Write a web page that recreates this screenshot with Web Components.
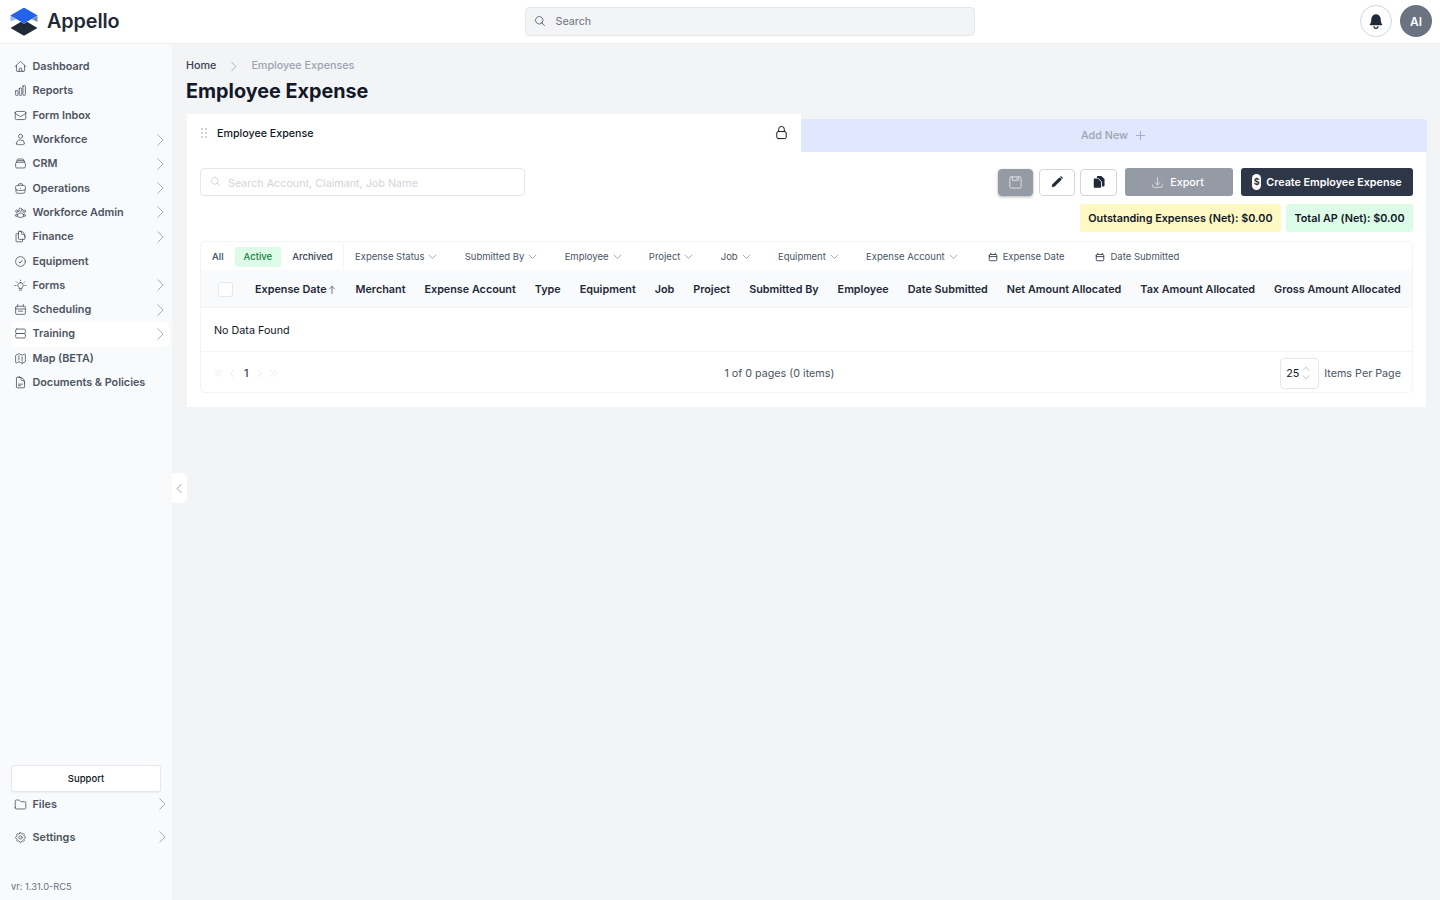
<!DOCTYPE html>
<html lang="en"><head><meta charset="utf-8"><title>Employee Expense</title>
<style>
html,body{margin:0;padding:0;height:100%;overflow:hidden;background:#f3f4f6;font-family:Inter,"Liberation Sans",sans-serif;color:#111827}
</style></head><body>
<app-shell>
  <app-header slot="header"></app-header>
  <side-nav slot="nav"></side-nav>
  <expense-page slot="main"></expense-page>
</app-shell>
<script>
const P={
home:'M2.25 12l8.954-8.955c.44-.439 1.152-.439 1.591 0L21.75 12M4.5 9.75v10.125c0 .621.504 1.125 1.125 1.125H9.75v-4.875c0-.621.504-1.125 1.125-1.125h2.25c.621 0 1.125.504 1.125 1.125V21h4.125c.621 0 1.125-.504 1.125-1.125V9.75M8.25 21h8.25',
chart:'M3 13.125C3 12.504 3.504 12 4.125 12h2.25c.621 0 1.125.504 1.125 1.125v6.75C7.5 20.496 6.996 21 6.375 21h-2.25A1.125 1.125 0 013 19.875v-6.75zM9.75 8.625c0-.621.504-1.125 1.125-1.125h2.25c.621 0 1.125.504 1.125 1.125v11.25c0 .621-.504 1.125-1.125 1.125h-2.25a1.125 1.125 0 01-1.125-1.125V8.625zM16.5 4.125c0-.621.504-1.125 1.125-1.125h2.25C20.496 3 21 3.504 21 4.125v15.75c0 .621-.504 1.125-1.125 1.125h-2.25a1.125 1.125 0 01-1.125-1.125V4.125z',
mail:'M21.75 6.75v10.5a2.25 2.25 0 01-2.25 2.25h-15a2.25 2.25 0 01-2.25-2.25V6.75m19.5 0A2.25 2.25 0 0019.5 4.5h-15a2.25 2.25 0 00-2.25 2.25m19.5 0v.243a2.25 2.25 0 01-1.07 1.916l-7.5 4.615a2.25 2.25 0 01-2.36 0L3.32 8.91a2.25 2.25 0 01-1.07-1.916V6.75',
user:'M15.75 6a3.75 3.75 0 11-7.5 0 3.75 3.75 0 017.5 0zM4.501 20.118a7.5 7.5 0 0114.998 0A17.933 17.933 0 0112 21.75c-2.676 0-5.216-.584-7.499-1.632z',
stack:'M6 6.878V6a2.25 2.25 0 012.25-2.25h7.5A2.25 2.25 0 0118 6v.878m-12 0c.235-.083.487-.128.75-.128h10.5c.263 0 .515.045.75.128m-12 0A2.25 2.25 0 004.5 9v.878m13.5-3A2.25 2.25 0 0119.5 9v.878m0 0a2.246 2.246 0 00-.75-.128H5.25c-.263 0-.515.045-.75.128m15 0A2.25 2.25 0 0121 12v6a2.25 2.25 0 01-2.25 2.25H5.25A2.25 2.25 0 013 18v-6c0-.98.626-1.813 1.5-2.122',
brief:'M20.25 14.15v4.25c0 1.094-.787 2.036-1.872 2.18-2.087.277-4.216.42-6.378.42s-4.291-.143-6.378-.42c-1.085-.144-1.872-1.086-1.872-2.18v-4.25m16.5 0a2.18 2.18 0 00.75-1.661V8.706c0-1.081-.768-2.015-1.837-2.175a48.114 48.114 0 00-3.413-.387m4.5 8.006c-.194.165-.42.295-.673.38A23.978 23.978 0 0112 15.75c-2.648 0-5.195-.429-7.577-1.22a2.016 2.016 0 01-.673-.38m0 0A2.18 2.18 0 013 12.489V8.706c0-1.081.768-2.015 1.837-2.175a48.111 48.111 0 013.413-.387m7.5 0V5.25A2.25 2.25 0 0013.5 3h-3a2.25 2.25 0 00-2.25 2.25v.894m7.5 0a48.667 48.667 0 00-7.5 0M12 12.75h.008v.008H12v-.008z',
group:'M18 18.72a9.094 9.094 0 003.741-.479 3 3 0 00-4.682-2.72m.94 3.198l.001.031c0 .225-.012.447-.037.666A11.944 11.944 0 0112 21c-2.17 0-4.207-.576-5.963-1.584A6.062 6.062 0 016 18.719m12 0a5.971 5.971 0 00-.941-3.197m0 0A5.995 5.995 0 0012 12.75a5.995 5.995 0 00-5.058 2.772m0 0a3 3 0 00-4.681 2.72 8.986 8.986 0 003.74.477m.94-3.197a5.971 5.971 0 00-.94 3.197M15 6.75a3 3 0 11-6 0 3 3 0 016 0zm6 3a2.25 2.25 0 11-4.5 0 2.25 2.25 0 014.5 0zm-13.5 0a2.25 2.25 0 11-4.5 0 2.25 2.25 0 014.5 0z',
dup:'M15.75 17.25v3.375c0 .621-.504 1.125-1.125 1.125h-9.75a1.125 1.125 0 01-1.125-1.125V7.875c0-.621.504-1.125 1.125-1.125H6.75a9.06 9.06 0 011.5.124m7.5 10.376h3.375c.621 0 1.125-.504 1.125-1.125V11.25c0-4.46-3.243-8.161-7.5-8.876a9.06 9.06 0 00-1.5-.124H9.375c-.621 0-1.125.504-1.125 1.125v3.5m7.5 10.375H9.375a1.125 1.125 0 01-1.125-1.125v-9.25m12 6.625v-1.875a3.375 3.375 0 00-3.375-3.375h-1.5a1.125 1.125 0 01-1.125-1.125v-1.5a3.375 3.375 0 00-3.375-3.375H9.75',
check:'M9 12.75L11.25 15 15 9.75M21 12a9 9 0 11-18 0 9 9 0 0118 0z',
bulb:'M12 6.5a5 5 0 00-3 9v2.2h6v-2.2a5 5 0 00-3-9zM10 20.5h4M12 2v1.6M4.2 5l1.2 1.2M19.8 5l-1.2 1.2M2 12h1.8M20.2 12H22',
cal:'M6.75 3v3M17.25 3v3M3 8.5A2.25 2.25 0 015.25 6h13.5A2.25 2.25 0 0121 8.5v10.25A2.25 2.25 0 0118.75 21H5.25A2.25 2.25 0 013 18.75V8.5zM3 11h18',
cal2:'M6.750 3v3M17.250 3v3M3 8.500A2.250 2.250 0 015.250 6h13.500A2.250 2.250 0 0121 8.500v10.250A2.250 2.250 0 0118.750 21H5.250A2.250 2.250 0 013 18.750V8.500zM3 11h18M8 15h8',
server:'M5.25 3.75h13.5A2.25 2.25 0 0121 6v3.75A2.25 2.25 0 0118.75 12H5.25A2.25 2.25 0 013 9.75V6a2.25 2.25 0 012.25-2.25zM5.25 12h13.5A2.25 2.25 0 0121 14.25V18a2.25 2.25 0 01-2.25 2.25H5.25A2.25 2.25 0 013 18v-3.75A2.25 2.25 0 015.25 12z',
map:'M9 6.75V15m6-6v8.25m.503 3.498l4.875-2.437c.381-.19.622-.58.622-1.006V4.82c0-.836-.88-1.38-1.628-1.006l-3.869 1.934c-.317.159-.69.159-1.006 0L9.503 3.252a1.125 1.125 0 00-1.006 0L3.622 5.689C3.24 5.88 3 6.27 3 6.695V19.18c0 .836.88 1.38 1.628 1.006l3.869-1.934c.317-.159.69-.159 1.006 0l4.994 2.497c.317.158.69.158 1.006 0z',
doc:'M19.5 14.25v-2.625a3.375 3.375 0 00-3.375-3.375h-1.5A1.125 1.125 0 0113.5 7.125v-1.5a3.375 3.375 0 00-3.375-3.375H8.25m0 12.75h7.5m-7.5 3H12M10.5 2.25H5.625c-.621 0-1.125.504-1.125 1.125v17.25c0 .621.504 1.125 1.125 1.125h12.75c.621 0 1.125-.504 1.125-1.125V11.25a9 9 0 00-9-9z',
folder:'M2.25 18V6a2.25 2.25 0 012.25-2.25h4.379a1.5 1.5 0 011.061.44l2.12 2.12a1.5 1.5 0 001.06.44H19.5A2.25 2.25 0 0121.75 9v9a2.25 2.25 0 01-2.25 2.25h-15A2.25 2.25 0 012.25 18z',
cog:'M10.343 3.94c.09-.542.56-.94 1.11-.94h1.093c.55 0 1.02.398 1.11.94l.149.894c.07.424.384.764.78.93.398.164.855.142 1.205-.108l.737-.527a1.125 1.125 0 011.45.12l.773.774c.39.389.44 1.002.12 1.45l-.527.737c-.25.35-.272.806-.107 1.204.165.397.505.71.93.78l.893.15c.543.09.94.56.94 1.109v1.094c0 .55-.397 1.02-.94 1.11l-.893.149c-.425.07-.765.383-.93.78-.165.398-.143.854.107 1.204l.527.738c.32.447.269 1.06-.12 1.45l-.774.773a1.125 1.125 0 01-1.449.12l-.738-.527c-.35-.25-.806-.272-1.203-.107-.397.165-.71.505-.781.929l-.149.894c-.09.542-.56.94-1.11.94h-1.094c-.55 0-1.019-.398-1.11-.94l-.148-.894c-.071-.424-.384-.764-.781-.93-.398-.164-.854-.142-1.204.108l-.738.527c-.447.32-1.06.269-1.45-.12l-.773-.774a1.125 1.125 0 01-.12-1.45l.527-.737c.25-.35.273-.806.108-1.204-.165-.397-.505-.71-.93-.78l-.894-.15c-.542-.09-.94-.56-.94-1.11v-1.094c0-.55.398-1.02.94-1.11l.894-.149c.424-.07.765-.383.93-.78.165-.398.143-.854-.107-1.204l-.527-.738a1.125 1.125 0 01.12-1.45l.773-.773a1.125 1.125 0 011.45-.12l.737.527c.35.25.807.272 1.204.107.397-.165.71-.505.78-.929l.15-.894zM15 12a3 3 0 11-6 0 3 3 0 016 0z',
right:'M8.25 3l9 9-9 9',
left:'M15.75 21l-9-9 9-9',
down:'M21 8.25l-9 9-9-9',
search:'M21 21l-5.197-5.197m0 0A7.5 7.5 0 105.196 5.196a7.5 7.5 0 0010.607 10.607z',
lock:'M16.5 10.5V6.75a4.5 4.5 0 10-9 0v3.75m-.75 11.25h10.5a2.25 2.25 0 002.25-2.25v-6.75a2.25 2.25 0 00-2.25-2.25H6.75a2.25 2.25 0 00-2.25 2.25v6.75a2.25 2.25 0 002.25 2.25z',
plus:'M12 4.5v15m7.5-7.5h-15',
dl:'M3 16.5v2.25A2.25 2.25 0 005.25 21h13.5A2.25 2.25 0 0021 18.75V16.5M16.5 12L12 16.5m0 0L7.5 12m4.5 4.5V3',
save:'M5 3h14a2 2 0 012 2v14a2 2 0 01-2 2H5a2 2 0 01-2-2V5a2 2 0 012-2zM7 3v5.5h10V3M14 5v1.5',
up:'M12 21V3.500m0 0L6 9.500m6-6l6 6',
dleft:'M11.25 4.5l-7.5 7.5 7.5 7.5m9-15l-7.5 7.5 7.5 7.5',
dright:'M12.75 4.5l7.5 7.5-7.5 7.5m-9-15l7.5 7.5-7.5 7.5'
};
const svg=(n,s,c='currentColor',w=1.5,x='')=>`<svg xmlns="http://www.w3.org/2000/svg" width="${s}" height="${s}" viewBox="0 0 24 24" fill="none" stroke="${c}" stroke-width="${w}" stroke-linecap="round" stroke-linejoin="round" style="flex:none;display:block;${x}"><path d="${P[n]}"/></svg>`;
function def(name,html){customElements.define(name,class extends HTMLElement{constructor(){super();const r=this.attachShadow({mode:'open'});r.innerHTML=typeof html==='function'?html(this):html;}});}

def('app-shell',`<style>
:host{display:grid;grid-template-columns:172px minmax(0,1fr);grid-template-rows:44px 856px;height:900px;width:1440px}
.h{grid-column:1/3;min-width:0}
.n{position:relative;min-width:0}
.m{min-width:0}
</style>
<div class="h"><slot name="header"></slot></div>
<div class="n"><slot name="nav"></slot></div>
<div class="m"><slot name="main"></slot></div>`);

def('app-header',`<style>
:host{display:grid;grid-template-columns:515px 450px minmax(0,1fr);align-items:center;height:44px;box-sizing:border-box;background:#fff;border-bottom:1px solid #eceef1;padding:0 8px 1px 10px;position:relative}
.logo{display:flex;align-items:center;gap:9px}
.name{font:600 19.800px/24px Inter,sans-serif;color:#1f2937;letter-spacing:-.1px}
.s{height:29px;box-sizing:border-box;background:#f3f4f6;border:1px solid #e5e7eb;border-radius:4px;display:flex;align-items:center;gap:9.500px;padding-left:8px;font:400 10.750px Inter,sans-serif;color:#6b7280}
.r{display:flex;justify-content:flex-end;align-items:center;gap:8px}
.b{width:32px;height:32px;box-sizing:border-box;border:1px solid #d1d5db;border-radius:50%;display:flex;align-items:center;justify-content:center}
.a{width:32px;height:32px;border-radius:50%;background:#6b7280;color:#fff;font:600 12px Inter,sans-serif;display:flex;align-items:center;justify-content:center}
</style>
<div class="logo"><svg width="28" height="29" viewBox="0 0 28 29" style="display:block;flex:none"><path d="M.5 21 14 13l13.500 8L14 28.700z" fill="#1f2937"/><path d="M.5 8.500v5.700l7-2.500z" fill="#93b4f5"/><path d="M27.500 8.500v6.500l-6.500-3.200z" fill="#7f8da3"/><path d="M.5 8.500 14 .7l13.500 7.800L14 16.200z" fill="#2563eb" stroke="#fff" stroke-width=".9" paint-order="stroke"/><path d="M.5 8.500 14 .7l13.500 7.800L14 16.200z" fill="#2563eb"/></svg><span class="name">Appello</span></div>
<div class="s">${svg('search',12,'#6b7280',2)}<span>Search</span></div>
<div class="r"><div class="b"><svg width="16" height="16" viewBox="0 0 24 24" fill="#1f2937"><path d="M12 2a7 7 0 00-7 7c0 4-.9 6.300-2.300 8-.4.6 0 1.300.7 1.300h17.200c.7 0 1.100-.7.700-1.300C19.900 15.300 19 13 19 9a7 7 0 00-7-7z"/><path d="M9 20a3 3 0 006 0" fill="none" stroke="#1f2937" stroke-width="1.800"/></svg></div><div class="a">AI</div></div>`);

const ICONS={Dashboard:'home',Reports:'chart','Form Inbox':'mail',Workforce:'user',CRM:'stack',Operations:'brief','Workforce Admin':'group',Finance:'dup',Equipment:'check',Forms:'bulb',Scheduling:'cal2',Training:'server','Map (BETA)':'map','Documents & Policies':'doc',Files:'folder',Settings:'cog'};
def('nav-item',el=>{const l=el.getAttribute('label');return `<style>
:host{display:flex;align-items:center;height:24.3px;border-radius:4px;padding:0 2px 0 3px;gap:5.500px;font:600 10.800px/14px Inter,sans-serif;color:#4b5563}
:host([active]){background:#fff}
span{flex:1;white-space:nowrap}
</style>${svg(ICONS[l],13,'#4b5563',1.5,'margin-top:-1px')}<span>${l}</span>${el.hasAttribute('arrow')?svg('right',14,'#6b7280',1,'margin-top:-1px'):''}`});

def('side-nav',`<style>
:host{display:flex;flex-direction:column;height:856px;box-sizing:border-box;background:#f9fafb;padding:11px 0 7px 11px;position:relative}
.list{margin-right:3px}
.bottom{margin-top:auto;display:flex;flex-direction:column}
.sup{width:150px;height:27px;box-sizing:border-box;background:#fff;border:1px solid #e5e7eb;border-radius:3px;box-shadow:0 1px 1px rgba(0,0,0,.05);font:500 9.500px Inter,sans-serif;color:#111827;display:flex;align-items:center;justify-content:center;margin-bottom:1px}
nav-item.w{padding-right:3px}
.g{margin-top:8.700px}
.v{margin-top:31px;font:400 9.300px/12px Inter,sans-serif;color:#6b7280}
.tog{position:absolute;left:172px;top:429px;width:15px;height:30px;background:#fff;border-radius:0 6px 6px 0;display:flex;align-items:center;justify-content:center;z-index:2}
</style>
<div class="list">
<nav-item label="Dashboard"></nav-item><nav-item label="Reports"></nav-item><nav-item label="Form Inbox"></nav-item>
<nav-item label="Workforce" arrow></nav-item><nav-item label="CRM" arrow></nav-item><nav-item label="Operations" arrow></nav-item>
<nav-item label="Workforce Admin" arrow></nav-item><nav-item label="Finance" arrow></nav-item><nav-item label="Equipment"></nav-item>
<nav-item label="Forms" arrow></nav-item><nav-item label="Scheduling" arrow></nav-item><nav-item label="Training" arrow active></nav-item>
<nav-item label="Map (BETA)"></nav-item><nav-item label="Documents &amp; Policies"></nav-item>
</div>
<div class="bottom"><div class="sup">Support</div>
<nav-item class="w" label="Files" arrow></nav-item><nav-item class="w g" label="Settings" arrow></nav-item>
<div class="v">vr: 1.31.0-RC5</div></div>
<div class="tog">${svg('left',11,'#6b7280',1.4)}</div>`);

def('page-tabs',`<style>
:host{display:flex;align-items:flex-end;height:38px}
.t{width:614px;height:38px;box-sizing:border-box;background:#fff;display:flex;align-items:flex-start;padding:12.600px 12px 0 14px;font:500 10.700px/14px Inter,sans-serif;color:#111827;gap:10px}
.t span{flex:1}
.d{display:grid;grid-template-columns:2px 2px;gap:2px;margin-top:1px;width:6px}
.d i{width:2px;height:2px;background:#d1d5db}
.a{flex:1;height:33px;box-sizing:border-box;padding-bottom:1px;background:#e0e7ff;border-radius:0 3px 0 0;display:flex;align-items:center;justify-content:center;gap:6px;font:500 10.750px Inter,sans-serif;color:#9ca3af}
</style>
<div class="t"><div class="d"><i></i><i></i><i></i><i></i><i></i><i></i></div><span>Employee Expense</span>${svg('lock',15,'#111827',1.6,'margin-top:-1.600px')}</div>
<div class="a">Add New ${svg('plus',13,'#9ca3af',1.6)}</div>`);

def('tool-bar',`<style>
:host{display:flex;flex-direction:column;gap:8px;padding:16px 13px 0 13px}
.row{display:flex;justify-content:space-between;align-items:flex-start}
.s{width:325px;height:28px;box-sizing:border-box;border:1px solid #e5e7eb;border-radius:4px;display:flex;align-items:center;gap:7px;padding:2px 0 0 9px;font:400 10.750px Inter,sans-serif;color:#d1d5db}
.s svg{margin-top:-3px}
.acts{display:flex;align-items:center}
.i{width:36px;height:27px;box-sizing:border-box;border:1px solid #d1d5db;border-radius:4px;display:flex;align-items:center;justify-content:center;background:#fff;margin-right:5px}
.i.sv{width:35px;background:#959ba4;border-color:#959ba4;box-shadow:0 1px 3px rgba(0,0,0,.3);margin-right:6px}
.i.cp{width:37px}
.e{width:108px;height:28px;box-sizing:border-box;margin-left:3px;background:#959ba4;border-radius:3px;color:#fff;font:500 10.750px Inter,sans-serif;display:flex;align-items:center;justify-content:center;gap:6px;padding-right:3px}
.c{width:172px;height:28px;box-sizing:border-box;margin-left:8px;background:#2d3748;border-radius:3px;color:#fff;font:600 10.750px Inter,sans-serif;display:flex;align-items:center;justify-content:center;gap:5px}
.m{width:9px;height:16px;border-radius:5px;background:#fff;color:#2d3748;font:700 9px/16px Inter,sans-serif;text-align:center}
.bd{display:flex;justify-content:flex-end;gap:5px}
.bd div{height:28px;box-sizing:border-box;border-radius:3px;font:600 10.800px/29px Inter,sans-serif;color:#111827;padding:0 8.500px}
.y{background:#fef9c3}.g{background:#dcfce7}
</style>
<div class="row"><div class="s">${svg('search',11,'#d1d5db',2)}<span>Search Account, Claimant, Job Name</span></div>
<div class="acts"><div class="i sv">${svg('save',15,'#e5e7eb',1.4)}</div>
<div class="i"><svg width="14" height="14" viewBox="0 0 24 24" fill="#1f2937"><path d="M3 21l1.200-5L16.500 3.800l3.700 3.700L8 19.800z"/><path d="M17.800 2.500a1.500 1.500 0 012.100 0l1.600 1.600a1.500 1.500 0 010 2.100l-.6.600-3.700-3.700z"/></svg></div>
<div class="i cp"><svg width="14" height="14" viewBox="0 0 24 24" fill="#1f2937"><path d="M10 1.500h6l5.500 5.500v11a1.500 1.500 0 01-1.500 1.500h-3V11.500L10.500 5H8.500V3A1.500 1.500 0 0110 1.500z"/><path d="M4.500 6H10l5.500 5.500v9a1.500 1.500 0 01-1.500 1.500H4.500A1.500 1.500 0 013 20.500v-13A1.500 1.500 0 014.500 6z"/></svg></div>
<div class="e">${svg('dl',13,'#e5e7eb',1.500)}<span>Export</span></div>
<div class="c"><span class="m">$</span><span>Create Employee Expense</span></div></div></div>
<div class="bd"><div class="y">Outstanding Expenses (Net): $0.00</div><div class="g">Total AP (Net): $0.00</div></div>`);

def('filter-chip',el=>`<style>:host{display:flex;align-items:center;gap:4px;white-space:nowrap}</style><slot></slot>${svg('down',9,'#6b7280',1.6)}`);
def('date-chip',`<style>:host{display:flex;align-items:center;gap:5px;white-space:nowrap}</style>${svg('cal',10,'#374151',2.2)}<slot></slot>`);

def('filter-row',`<style>
:host{display:flex;align-items:center;height:28px;padding-top:1px;font:400 9.500px Inter,sans-serif;color:#4b5563;box-sizing:border-box}
.seg{display:flex;align-items:center;height:27px;padding:0 0 0 11px;border-right:1px solid #f3f4f6;box-sizing:border-box;width:143px;color:#374151;font-weight:500}
.ac{background:#dcfce7;color:#15803d;border-radius:3px;padding:0 9px;height:20px;line-height:20px;margin:0 11px}
.f{display:flex;align-items:center;gap:27.300px;margin-left:11px}
.d{display:flex;gap:31px;margin-left:30px}
</style>
<div class="seg"><span>All</span><span class="ac">Active</span><span>Archived</span></div>
<div class="f"><filter-chip>Expense Status</filter-chip><filter-chip>Submitted By</filter-chip><filter-chip>Employee</filter-chip><filter-chip>Project</filter-chip><filter-chip>Job</filter-chip><filter-chip>Equipment</filter-chip><filter-chip>Expense Account</filter-chip></div>
<div class="d"><date-chip>Expense Date</date-chip><date-chip>Date Submitted</date-chip></div>`);

def('data-table',`<style>
:host{display:block;margin:9px 13px 0;border:1px solid #f3f4f6;border-radius:5px;box-sizing:border-box;height:152px;background:#fff}
.hd{display:flex;align-items:center;height:38px;background:#f9fafb;border-bottom:1px solid #f3f4f6;box-sizing:border-box;padding:2px 0 0 54px;gap:19px;font:600 10.800px Inter,sans-serif;color:#1f2937;position:relative;white-space:nowrap}
.cb{position:absolute;left:17px;top:12px;width:15px;height:15px;background:#fff;border:1px solid #e5e7eb;border-radius:3px;box-sizing:border-box}
.srt{display:flex;align-items:center;gap:0}
.nd{height:44px;box-sizing:border-box;padding:2px 0 0 13px;display:flex;align-items:center;font:400 10.750px Inter,sans-serif;color:#111827;border-bottom:1px solid #f3f4f6}
.pg{height:41px;box-sizing:border-box;padding:1px 11px 0 13px;display:flex;align-items:center;justify-content:space-between;font:400 10.750px Inter,sans-serif;color:#4b5563}
.l{display:flex;align-items:center;gap:5px;color:#374151}.l b{font-weight:500;margin:0 2px}
.r{display:flex;align-items:center;gap:5px}
.sel{width:39px;height:31px;box-sizing:border-box;border:1px solid #e5e7eb;border-radius:4px;display:flex;align-items:center;gap:3px;padding-left:5px;color:#111827}
.ar{display:flex;flex-direction:column}
</style>
<filter-row></filter-row>
<div class="hd"><span class="cb"></span><span class="srt">Expense Date${svg('up',10,'#374151',1.6)}</span><span>Merchant</span><span>Expense Account</span><span>Type</span><span>Equipment</span><span>Job</span><span>Project</span><span>Submitted By</span><span>Employee</span><span>Date Submitted</span><span>Net Amount Allocated</span><span>Tax Amount Allocated</span><span>Gross Amount Allocated</span></div>
<div class="nd">No Data Found</div>
<div class="pg"><div class="l">${svg('dleft',9,'#d1d5db',1.4)}${svg('left',9,'#d1d5db',1.4)}<b>1</b>${svg('right',9,'#d1d5db',1.4)}${svg('dright',9,'#d1d5db',1.4)}</div>
<div>1 of 0 pages (0 items)</div>
<div class="r"><div class="sel"><span>25</span><span class="ar">${svg('down',8,'#9ca3af',2,'transform:rotate(180deg)')}${svg('down',8,'#9ca3af',2)}</span></div><span>Items Per Page</span></div></div>`);

def('expense-page',`<style>
:host{display:block;padding:14px 13px 0 14px;box-sizing:border-box;height:856px}
.bc{display:flex;align-items:center;gap:12px;height:16px;font:500 10.750px/16px Inter,sans-serif;color:#374151}
.bc .c{color:#9ca3af}
h1{margin:3px 0 9px;font:700 19.800px/28px Inter,sans-serif;color:#111827}
.wrap{margin-left:1px}
.card{background:#fff;height:255px;box-sizing:border-box;margin-right:1px}
</style>
<div class="bc"><span>Home</span>${svg('right',11,'#6b7280',1.2)}<span class="c">Employee Expenses</span></div>
<h1>Employee Expense</h1>
<div class="wrap"><page-tabs></page-tabs><div class="card"><tool-bar></tool-bar><data-table></data-table></div></div>`);
</script>
</body></html>
